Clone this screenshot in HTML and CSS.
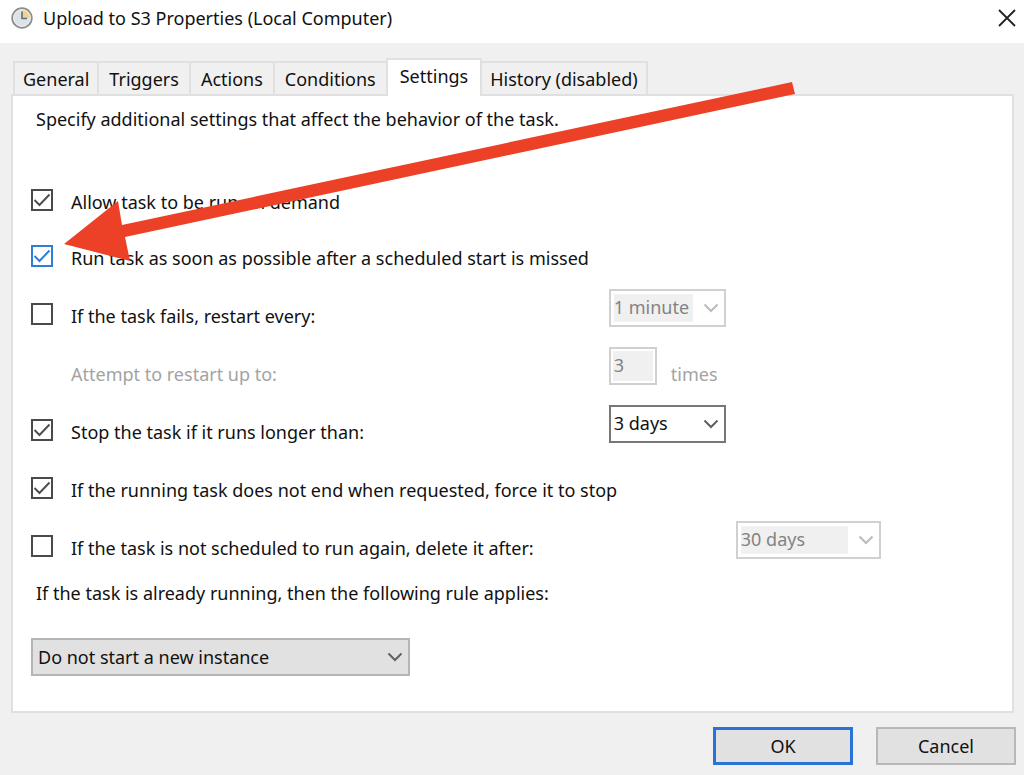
FILE: index.html
```
<!DOCTYPE html>
<html lang="en">
<head>
    <meta charset="UTF-8">
    <meta name="viewport" content="width=device-width, initial-scale=1.0">
    <title>Upload to S3 Properties (Local Computer)</title>
    <link rel="stylesheet" href="styles.css">
</head>
<body>
    <div class="dialog">
        <header class="titlebar">
            <svg class="clock" viewBox="0 0 22 22" aria-hidden="true">
                <circle cx="11" cy="11" r="9.8" fill="#dbe3e8" stroke="#8b8d8e" stroke-width="1.8"/>
                <path d="M11 11V2.5a8.5 8.5 0 0 1 8.5 8.5z" fill="#f3d28c"/>
                <circle cx="11" cy="11" r="8.3" fill="none" stroke="#eef1f2" stroke-width="1"/>
                <path d="M11 4.5v7h5" fill="none" stroke="#5d6f80" stroke-width="1.6"/>
            </svg>
            <h1>Upload to S3 Properties (Local Computer)</h1>
            <button class="close" aria-label="Close">
                <svg viewBox="0 0 18 18"><path d="M1 1l16 16M17 1L1 17" fill="none" stroke="#222" stroke-width="1.8"/></svg>
            </button>
        </header>

        <main class="content">
            <div class="tabs" role="tablist">
                <button class="tab" role="tab">General</button>
                <button class="tab" role="tab">Triggers</button>
                <button class="tab" role="tab">Actions</button>
                <button class="tab" role="tab">Conditions</button>
                <button class="tab active" role="tab" aria-selected="true">Settings</button>
                <button class="tab" role="tab">History (disabled)</button>
            </div>

            <form class="panel" id="settings">
                <p class="intro">Specify additional settings that affect the behavior of the task.</p>

                <div class="row tight">
                    <label class="check"><input type="checkbox" checked><span>Allow task to be run on demand</span></label>
                </div>
                <div class="row">
                    <label class="check focused"><input type="checkbox" checked><span>Run task as soon as possible after a scheduled start is missed</span></label>
                </div>
                <div class="row">
                    <label class="check"><input type="checkbox"><span>If the task fails, restart every:</span></label>
                    <select class="combo" aria-label="Restart interval" disabled><option>1 minute</option></select>
                </div>
                <div class="row">
                    <label class="sub" for="attempts">Attempt to restart up to:</label>
                    <div class="attempts">
                        <input type="text" id="attempts" value="3" disabled>
                        <span>times</span>
                    </div>
                </div>
                <div class="row">
                    <label class="check"><input type="checkbox" checked><span>Stop the task if it runs longer than:</span></label>
                    <select class="combo" aria-label="Stop after"><option>3 days</option></select>
                </div>
                <div class="row">
                    <label class="check"><input type="checkbox" checked><span>If the running task does not end when requested, force it to stop</span></label>
                </div>
                <div class="row">
                    <label class="check"><input type="checkbox"><span>If the task is not scheduled to run again, delete it after:</span></label>
                    <select class="combo wide" aria-label="Delete after" disabled><option>30 days</option></select>
                </div>

                <label class="rule-label" for="rule">If the task is already running, then the following rule applies:</label>
                <select class="combo rule" id="rule"><option>Do not start a new instance</option></select>
            </form>
        </main>

        <footer class="buttons">
            <button class="btn default">OK</button>
            <button class="btn">Cancel</button>
        </footer>

        <svg class="arrow" width="732" height="180" viewBox="64 82 732 180" aria-hidden="true">
            <path d="M64 244L118 201L122 225L792 82L795 94L125 237L130 261z" fill="#ec4127"/>
        </svg>
    </div>
</body>
</html>
```
FILE: styles.css
```
* {
    box-sizing: border-box;
}
body {
    margin: 0;
    font-family: "Noto Sans", "Open Sans", sans-serif;
    font-size: 18px;
    line-height: 26px;
    color: #111;
}
button, input, select {
    font: inherit;
    color: inherit;
}
.dialog {
    position: relative;
    display: flex;
    flex-direction: column;
    min-height: 100vh;
    background-color: #f0f0f0;
}
.titlebar {
    display: flex;
    align-items: center;
    gap: 10px;
    height: 43px;
    padding: 0 8px 8px 11px;
    background-color: #fff;
}
.titlebar h1 {
    flex: 1;
    margin: 0;
    font-size: 18px;
    font-weight: normal;
}
.clock {
    width: 22px;
    height: 22px;
}
.close {
    padding: 0;
    border: none;
    background: none;
}
.close svg {
    display: block;
    width: 18px;
    height: 18px;
}
.content {
    flex: 1;
    display: flex;
    flex-direction: column;
    padding: 15px 10px 0 11px;
}
.tabs {
    display: flex;
    align-items: flex-end;
    padding-left: 2px;
}
.tab {
    height: 33px;
    padding: 0 10px;
    border: 2px solid #e0e0e0;
    border-width: 2px 0 0 2px;
    background-color: #f0f0f0;
}
.tab:first-child {
    padding: 0 8px;
}
.tab:last-child {
    padding: 0 8px;
    border-right-width: 2px;
}
.tab.active {
    height: 38px;
    margin-bottom: -2px;
    padding: 0 12px 4px;
    border-right-width: 2px;
    background-color: #fff;
    z-index: 1;
}
.tab.active + .tab {
    border-left: none;
}
.panel {
    flex: 1;
    display: flex;
    flex-direction: column;
    align-items: stretch;
    padding: 10px 18px;
    border: 2px solid #e0e0e0;
    background-color: #fff;
}
.intro {
    margin: 0 0 43px;
    padding-left: 5px;
}
.row {
    display: grid;
    grid-template-columns: 60% auto;
    align-items: start;
    justify-content: start;
    min-height: 38px;
    margin-bottom: 20px;
}
.row.tight {
    margin-bottom: 18px;
}
.check {
    display: flex;
    align-items: flex-start;
    gap: 18px;
    padding-top: 14px;
    margin-bottom: -2px;
    white-space: nowrap;
}
.check input {
    appearance: none;
    flex: none;
    width: 22px;
    height: 22px;
    margin: 0;
    border: 2px solid #4a4a4a;
    background: #fff center / 18px 18px no-repeat;
}
.check input:checked {
    background-image: url("data:image/svg+xml,%3Csvg xmlns='http://www.w3.org/2000/svg' viewBox='0 0 18 18'%3E%3Cpath d='M1.5 9l5 5L16.5 3.5' fill='none' stroke='%23505050' stroke-width='2'/%3E%3C/svg%3E");
}
.check.focused input {
    border-color: #2f7fd8;
    background-image: url("data:image/svg+xml,%3Csvg xmlns='http://www.w3.org/2000/svg' viewBox='0 0 18 18'%3E%3Cpath d='M1.5 9l5 5L16.5 3.5' fill='none' stroke='%232f7fd8' stroke-width='2'/%3E%3C/svg%3E");
}
.sub {
    padding: 14px 0 0 40px;
    margin-bottom: -2px;
    color: #a3a3a3;
}
.combo {
    appearance: none;
    width: 117px;
    height: 38px;
    padding: 0 30px 2px 3px;
    border: 2px solid #777;
    border-radius: 0;
    background: #fff url("data:image/svg+xml,%3Csvg xmlns='http://www.w3.org/2000/svg' viewBox='0 0 16 10'%3E%3Cpath d='M1.5 1.5L8 8L14.5 1.5' fill='none' stroke='%23606060' stroke-width='2'/%3E%3C/svg%3E") right 5px center / 16px 10px no-repeat;
}
.combo:disabled {
    border-color: #d0d0d0;
    color: #838383;
    opacity: 1;
    background-image: url("data:image/svg+xml,%3Csvg xmlns='http://www.w3.org/2000/svg' viewBox='0 0 16 10'%3E%3Cpath d='M1.5 1.5L8 8L14.5 1.5' fill='none' stroke='%23bbb' stroke-width='2'/%3E%3C/svg%3E"), linear-gradient(#f0f0f0, #f0f0f0);
    background-position: right 5px center, 3px 3px;
    background-size: 16px 10px, calc(100% - 34px) 28px;
}
.combo.wide {
    width: 145px;
    margin-left: 127px;
}
.combo.rule {
    width: 379px;
    padding: 0 30px 0 5px;
    border-color: #b5b5b5;
    background-color: #e1e1e1;
}
.attempts {
    display: flex;
    gap: 14px;
    color: #a3a3a3;
}
.attempts input {
    width: 48px;
    height: 38px;
    padding: 0 3px 2px;
    border: 2px solid #d0d0d0;
    box-shadow: inset 0 0 0 2px #fff;
    background-color: #f0f0f0;
    color: #838383;
}
.attempts span {
    padding-top: 14px;
    margin-bottom: -2px;
}
.rule-label {
    padding: 1px 0 32px 5px;
}
.buttons {
    display: flex;
    justify-content: flex-end;
    gap: 23px;
    padding: 14px 8px 10px;
}
.btn {
    width: 140px;
    height: 38px;
    border: 2px solid #b8b8b8;
    background-color: #e1e1e1;
}
.btn.default {
    border: 3px solid #2a73d6;
}
/* callout pointing at the "run as soon as possible" option */
.arrow {
    position: absolute;
    left: 64px;
    top: 82px;
    z-index: 2;
    pointer-events: none;
}
```
